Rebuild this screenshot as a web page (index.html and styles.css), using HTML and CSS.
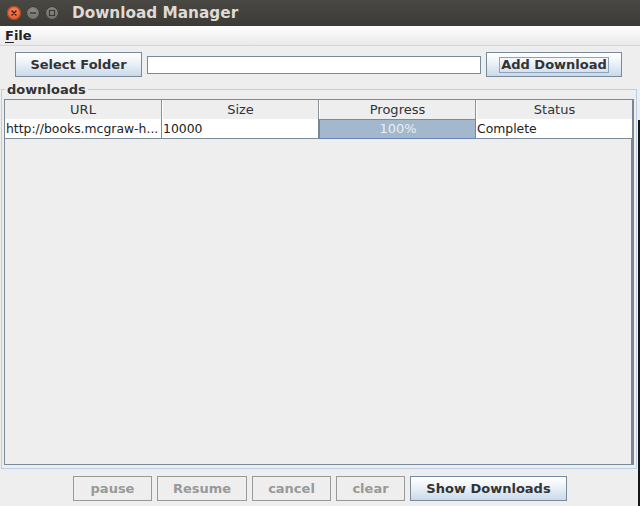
FILE: index.html
```html
<!DOCTYPE html>
<html>
<head>
<meta charset="utf-8">
<title>Download Manager</title>
<link rel="stylesheet" href="styles.css">
</head>
<body>
<div class="window">
  <div class="titlebar">
    <div class="controls">
      <span class="wbtn close"><svg width="14" height="14" viewBox="0 0 14 14"><path d="M5 5 L9 9 M9 5 L5 9" stroke="#3a1a0c" stroke-width="1.4" stroke-linecap="round"/></svg></span>
      <span class="wbtn"><svg width="14" height="14" viewBox="0 0 14 14"><path d="M4 7 H10" stroke="#3a3934" stroke-width="1.4"/></svg></span>
      <span class="wbtn"><svg width="14" height="14" viewBox="0 0 14 14"><rect x="4.5" y="4.5" width="5" height="5" fill="none" stroke="#3a3934" stroke-width="1.2"/></svg></span>
    </div>
    <div class="title">Download Manager</div>
  </div>
  <div class="menubar"><span class="menu"><u>F</u>ile</span></div>
  <div class="toolbar">
    <button class="btn sel">Select Folder</button>
    <input class="field" type="text" value="">
    <button class="btn add"><span class="focus">Add Download</span></button>
  </div>
  <fieldset class="group">
    <legend>downloads</legend>
    <div class="pane">
      <div class="grid head">
        <div class="hc">URL</div>
        <div class="hc">Size</div>
        <div class="hc">Progress</div>
        <div class="hc">Status</div>
      </div>
      <div class="grid row">
        <div class="cell">http://books.mcgraw-h...</div>
        <div class="cell">10000</div>
        <div class="cell prog">100%</div>
        <div class="cell">Complete</div>
      </div>
    </div>
  </fieldset>
  <div class="actions">
    <button class="btn dis w-pause" disabled>pause</button>
    <button class="btn dis w-resume" disabled>Resume</button>
    <button class="btn dis w-cancel" disabled>cancel</button>
    <button class="btn dis w-clear" disabled>clear</button>
    <button class="btn w-show">Show Downloads</button>
  </div>
  <div class="edge"></div>
</div>
</body>
</html>
```

FILE: styles.css
```css
* { box-sizing: border-box; }
html, body { margin: 0; padding: 0; }
body { background: #eeeeee; font-family: "DejaVu Sans", "Liberation Sans", sans-serif; }
.window { position: relative; width: 640px; height: 506px; overflow: hidden; background: #eeeeee; }

.titlebar { height: 26px; background: linear-gradient(#4a4843, #3c3b37); display: flex; align-items: center; }
.controls { display: flex; gap: 5px; padding-left: 7px; }
.wbtn { width: 14px; height: 14px; border-radius: 50%; background: radial-gradient(circle at 50% 35%, #8d8a83, #6a6862); box-shadow: inset 0 0 0 1px #35342f; display: flex; }
.wbtn.close { background: radial-gradient(circle at 50% 35%, #f5855a, #e0501c); box-shadow: inset 0 0 0 1px #a8421a; }
.title { margin-left: 13px; color: #dfdbd2; font-weight: bold; font-size: 15.3px; }

.menubar { height: 20px; background: linear-gradient(#ffffff, #e9e9e9); border-bottom: 1px solid #d6d6d6; display: flex; align-items: center; padding-left: 5px; }
.menu { font-size: 13px; font-weight: bold; color: #222; }
.menu u { text-decoration-thickness: 1px; text-underline-offset: 2px; }

.toolbar { display: flex; align-items: center; gap: 5px; padding-left: 15px; margin-top: 6px; height: 25px; }
.btn { height: 25px; border: 1px solid #7a8a99; border-radius: 0; background: linear-gradient(#ffffff 0%, #f1f5fa 35%, #c9d9ea 100%); font-family: "DejaVu Sans", sans-serif; font-weight: bold; font-size: 13px; color: #333333; padding: 0; display: flex; align-items: center; justify-content: center; }
.sel { width: 127px; }
.add { width: 136px; }
.focus { border: 1px solid #8ea4bc; padding: 0 1px; line-height: 14px; }
.field { width: 334px; height: 18px; border: 1px solid #7a8a99; background: #fff; margin: 0; padding: 0; }

.group { margin: 5px 3px 0 1px; padding: 2px 2px 3px 2px; border: 1px solid #b8cfe5; min-width: 0; }
.group legend { font-size: 13px; font-weight: bold; color: #333; padding: 0 2px; margin-left: 1px; line-height: 15px; }
.pane { height: 366px; border-top: 1px solid #7a8a99; border-left: 1px solid #7a8a99; border-bottom: 1px solid #7a8a99; border-right: 3px solid #7d8590; background: #eeeeee; }
.grid { display: grid; grid-template-columns: 157px 157px 157px 156px; }
.head { height: 19px; border-bottom: 1px solid #7a8a99; }
.hc { font-size: 13px; color: #333; text-align: center; line-height: 19px; border-right: 1px solid #8a9299; border-left: 1px solid #ffffff; background: #eeeeee; }
.hc:first-child { border-left: none; }
.hc:last-child { border-right: none; }
.row { height: 20px; }
.cell { background: #fff; font-size: 12.4px; color: #222; line-height: 19px; padding-left: 1px; border-right: 1px solid #7a8a99; border-bottom: 1px solid #7a8a99; white-space: nowrap; overflow: hidden; }
.cell:last-child { border-right: none; }
.cell.prog { background: #a3b8cc; color: #e8eef4; text-align: center; border: 1px solid #6a84b8; border-top: 1px solid #7a8a99; line-height: 17px; font-size: 13px; }

.actions { display: flex; justify-content: center; gap: 5px; margin-top: 7px; padding-left: 0; }
.btn.dis { background: #eeeeee; border-color: #999999; color: #999999; }
.w-pause { width: 79px; }
.w-resume { width: 90px; }
.w-cancel { width: 79px; }
.w-clear { width: 69px; }
.w-show { width: 157px; }

.edge { position: absolute; right: 0; top: 120px; width: 2px; bottom: 0; background: #161616; }
```
